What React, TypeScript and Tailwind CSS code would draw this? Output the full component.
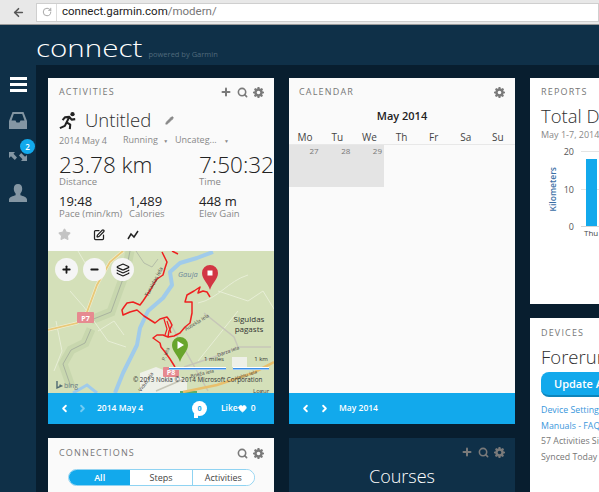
import { ArrowLeft, RotateCw, Plus, Minus, Search, Star, SquarePen, Pencil, ChevronLeft, ChevronRight, Heart, Layers } from "lucide-react";

function Gear({ className }: { className?: string }) {
  return (
    <svg viewBox="0 0 24 24" className={className} fill="currentColor">
      <path fillRule="evenodd" d="M10 0h4l.6 3.200 1.900.8 2.700-1.800 2.800 2.800-1.800 2.700.8 1.900L24 10.200v3.600l-3.200.6-.8 1.900 1.800 2.700-2.800 2.800-2.700-1.800-1.900.8L14 24h-4l-.6-3.200-1.900-.8L4.800 21.800 2 19l1.800-2.700-.8-1.900L0 13.800v-3.600l3.200-.6.8-1.900L2.200 5 5 2.200l2.700 1.800 1.700-.8zM12 8a4 4 0 100 8 4 4 0 000-8z" />
    </svg>
  );
}

function CardTools({ add, search }: { add?: boolean; search?: boolean }) {
  return (
    <div className="flex items-center gap-[5px] text-[#7a7a7a]">
      {add && <Plus className="w-[12px] h-[12px]" strokeWidth={4} />}
      {search && <Search className="w-[11px] h-[11px]" strokeWidth={3.5} />}
      <Gear className="w-[11px] h-[11px]" />
    </div>
  );
}

function CardTitle({ children }: { children: string }) {
  return <div className="text-[9px] leading-[14px] tracking-[0.13em] text-[#777777] uppercase">{children}</div>;
}

function Stat({ value, label, width, big }: { value: string; label: string; width: string; big?: boolean }) {
  return (
    <div className={width + " shrink-0"}>
      <div className={big ? "text-[22.5px] leading-[22px] font-light text-[#222222] whitespace-nowrap" : "text-[13px] leading-[14px] text-[#222222] whitespace-nowrap"}>{value}</div>
      <div className="text-[9.5px] leading-[11px] text-[#888888] whitespace-nowrap">{label}</div>
    </div>
  );
}

function MapView() {
  return (
    <svg viewBox="0 0 226 142" className="absolute inset-0 w-full h-full" fontFamily="Open Sans">
      <rect width="226" height="142" fill="#d4e0b9" />
      {/* forest bands and gray roads */}
      <path d="M43 78L37 92 23 99 15 113 23 136M43 69L63 61 72 36 78 20 82 0" stroke="#c8d7ae" strokeWidth="9" fill="none" />
      <path d="M43 78L37 92 23 99 15 113 23 136M43 69L63 61 72 36 78 20 82 0" stroke="#a9b39f" strokeWidth="1" fill="none" />
      <path d="M8 70L14 100 6 120M22 40L36 56 60 90 78 96M50 80L66 70 76 84M150 110L190 60M170 40L200 50 215 40 226 58M30 0L43 22M150 52C170 48 180 30 200 24" stroke="#e7eed6" strokeWidth="1" fill="none" />
      <path d="M88 0L96 12 104 16 110 8" stroke="#b4bda8" strokeWidth="1" fill="none" />
      {/* water */}
      <path d="M67 142L75 122 89 94 92 77 100 60 115 47 124 34 122 21 132 12 149 7 165 1" stroke="#a0cbea" strokeWidth="4" fill="none" strokeLinejoin="round" />
      <path d="M25 142L39 134 49 142" stroke="#a0cbea" strokeWidth="3" fill="none" />
      {/* town */}
      <path d="M92 122L108 116 128 124 139 130 139 142 92 142z" fill="#eef0e8" />
      <rect x="184" y="106" width="15" height="10" fill="#eef0e8" />
      <rect x="132" y="140" width="17" height="2" fill="#5fae6a" />
      {/* main roads */}
      <path d="M156 62L186 86 190 96M223 96L190 96 166 106 136 116M122 72L132 90 160 140M108 140L136 128" stroke="#c6c6b8" strokeWidth="1.500" fill="none" />
      <path d="M0 79L29 72 39 61 49 34 62 11 75 0" stroke="#f3eed2" strokeWidth="3" fill="none" />
      <path d="M0 79L29 72 39 61 49 34 62 11 75 0" stroke="#e8c978" strokeWidth="1.800" fill="none" />
      <path d="M135 141L169 134 205 122 226 111" stroke="#e8bf6c" strokeWidth="2.500" fill="none" />
      {/* route */}
      <path d="M114 1L119 11 117 17 115 24 109 28 107 31 103 38 99 44 95 50 92 54 85 51 79 52 76 56 74 59 75 64 82 61 89 59 96 65 107 72 112 68 119 66 122 70 124 74 121 80 120 86 115 84 109 84 105 87 112 92 113 96 117 101 122 108 127 116" stroke="#ee2020" strokeWidth="1.500" fill="none" strokeLinejoin="round" />
      <path d="M120 86L126 85 132 82 137 76 142 72 144 62 144 51 137 51 139 44 146 40 152 36 150 42 155 40 159 41 162 46M124 0L130 3" stroke="#ee2020" strokeWidth="1.500" fill="none" strokeLinejoin="round" />
      <path d="M116 68L119 78 117 84M119 70L123 82" stroke="#ee2020" strokeWidth="1.200" fill="none" />
      {/* signs */}
      <rect x="29" y="61" width="17" height="11" rx="1" fill="#e68a90" />
      <rect x="115" y="116" width="16" height="10" rx="1" fill="#e68a90" />
      <text x="37.500" y="69.500" fontSize="7" fontWeight="700" fill="#fff" textAnchor="middle">P7</text>
      <text x="123" y="124" fontSize="7" fontWeight="700" fill="#fff" textAnchor="middle">P8</text>
      {/* labels */}
      <text x="130" y="26" fontSize="7.500" fontStyle="italic" fill="#6f8a9b">Gauja</text>
      <text x="201" y="71" fontSize="8" fill="#333" textAnchor="middle">Siguldas</text>
      <text x="201" y="81" fontSize="8" fill="#333" textAnchor="middle">pagasts</text>
      <text x="0" y="0" fontSize="5.500" fill="#444" transform="translate(100 46) rotate(-62)">Turaidas iela</text>
      <text x="0" y="0" fontSize="5" fill="#444" transform="translate(138 80) rotate(-32)">Ausekļa iela</text>
      <text x="0" y="0" fontSize="5" fill="#444" transform="translate(170 106) rotate(-20)">Dārza iela</text>
      <text x="0" y="0" fontSize="5" fill="#444" transform="translate(143 127) rotate(-14)">Brieža iela</text>
      <text x="0" y="0" fontSize="5" fill="#444" transform="translate(117 110) rotate(-70)">P. iela</text>
      <text x="0" y="0" fontSize="5" fill="#444" transform="translate(93 141) rotate(-55)">Vidus iela</text>
      <text x="0" y="0" fontSize="5" fill="#444" transform="translate(188 129) rotate(-18)">Vaļņu iela</text>
      <text x="205" y="142" fontSize="6" fill="#444">Logur</text>
      {/* pins */}
      <path d="M162 39C160 32 154 28 154 22A8 8 0 0 1 170 22C170 28 164 32 162 39Z" fill="#d23644" />
      <rect x="159.500" y="19.500" width="5" height="5" fill="#ffffff" />
      <path d="M132 111C130 104 124 100 124 94A8 8 0 0 1 140 94C140 100 134 104 132 111Z" fill="#68a52c" />
      <path d="M129.500 90L136 94 129.500 98Z" fill="#ffffff" />
      {/* scale and attribution */}
      <text x="166" y="110" fontSize="6" fill="#333" textAnchor="middle">1 miles</text>
      <text x="213" y="110" fontSize="6" fill="#333" textAnchor="middle">1 km</text>
      <rect x="121" y="116" width="57" height="3" fill="#ffffff" />
      <rect x="185" y="116" width="36" height="3" fill="#ffffff" />
      <rect x="121" y="117" width="57" height="1.500" fill="#3b8fe8" />
      <rect x="185" y="117" width="36" height="1.500" fill="#3b8fe8" />
      <text x="85" y="131" fontSize="6.300" fill="#333">© 2013 Nokia   © 2014 Microsoft Corporation</text>
      <text x="16" y="137" fontSize="7" fill="#6e7f86">bing</text>
      <path d="M9 130v7l4.500-2-2-1" stroke="#4f6a72" strokeWidth="1.400" fill="none" />
    </svg>
  );
}

function BlueBar({ children }: { children: React.ReactNode }) {
  return <div className="h-[31px] shrink-0 flex items-center pl-[11px] bg-[#12a9ec] text-white">{children}</div>;
}

export default function App() {
  return (
    <div className="w-[599px] h-[492px] overflow-hidden flex flex-col bg-[#081e2f] font-['Open_Sans',sans-serif]">
      {/* browser bar */}
      <div className="h-[25px] shrink-0 flex items-center pl-[12px] gap-[11px] bg-[#e8e8e8] border-b border-[#9a9a9a]">
        <ArrowLeft className="w-[13px] h-[13px] text-[#555555]" strokeWidth={3} />
        <div className="flex-1 h-[19px] flex items-center bg-white border border-[#cfcfcf]">
          <div className="w-[20px] h-full flex items-center justify-center border-r border-[#dddddd]">
            <RotateCw className="w-[10px] h-[10px] text-[#999999]" />
          </div>
          <span className="pl-[5px] text-[11.5px] font-['Roboto',sans-serif] text-[#222222]">connect.garmin.com<span className="text-[#777777]">/modern/</span></span>
        </div>
      </div>

      {/* header */}
      <div className="h-[40px] shrink-0 flex items-end pl-[36px] pb-[4px] bg-[#0f3048]">
        <span className="origin-left scale-x-[1.23] text-[24px] leading-[26px] text-white font-light">connect</span>
        <span className="ml-[26px] pb-[1px] text-[7.5px] leading-[12px] text-[#4f6a7c]">powered by Garmin</span>
      </div>

      <div className="flex-1 flex min-h-0">
        {/* left rail */}
        <div className="w-[36px] shrink-0 flex flex-col items-center pt-[12px] bg-[#0f3048] text-[#8496a3]">
          <div className="w-[17px] flex flex-col gap-[3px]">
            <div className="h-[3px] bg-white" />
            <div className="h-[3px] bg-white" />
            <div className="h-[3px] bg-white" />
          </div>
          <svg viewBox="0 0 18 17" className="mt-[20px] w-[18px] h-[17px]" fill="currentColor">
            <path fillRule="evenodd" d="M3.500 0h11L18 9v8H0V9zM4.800 2L2.500 8.500H6.500L7.500 10.500h3L11.500 8.500H15.500L13.200 2z" />
          </svg>
          <div className="relative mt-[23px] w-[18px] h-[9px]">
            <svg viewBox="0 0 18 9" className="w-full h-full" fill="currentColor">
              <path d="M0 0h6L4.500 1.800 8 5.500 5.800 8 2 4.200 0 6zM18 9h-6l1.500-1.800L10 3.500 12.200 1 16 4.800 18 3z" />
            </svg>
            <span className="absolute -top-[13px] -right-[8px] w-[15px] h-[15px] rounded-full bg-[#12a9ec] text-white text-[8px] leading-[15px] text-center font-semibold">2</span>
          </div>
          <svg viewBox="0 0 18 18" className="mt-[23px] w-[18px] h-[18px]" fill="currentColor">
            <path d="M9 0c2.800 0 4.200 2 4.200 4.700 0 2-.8 3.600-1.800 4.800v1.700c2.500.9 6.600 1.900 6.600 4.300V18H0v-2.500c0-2.400 4.100-3.400 6.600-4.300V9.500C5.600 8.300 4.800 6.700 4.800 4.700 4.800 2 6.200 0 9 0z" />
          </svg>
        </div>

        <div className="flex-1 pl-[12px] pt-[13px] flex gap-[15px] min-w-0">
          {/* column 1 */}
          <div className="w-[226px] shrink-0 flex flex-col gap-[14px]">
            <div className="h-[346px] shrink-0 flex flex-col bg-[#fafafa]">
              <div className="flex-1 pl-[11px] pr-[10px] pt-[7px] overflow-hidden">
                <div className="flex items-center justify-between">
                  <CardTitle>Activities</CardTitle>
                  <CardTools add search />
                </div>
                <div className="mt-[9px] h-[24px] flex items-center">
                  <svg viewBox="0 0 20 20" className="w-[18px] h-[19px] text-[#222222]" fill="none" stroke="currentColor" strokeWidth="2.300" strokeLinejoin="round">
                    <circle cx="15" cy="3" r="2.400" fill="currentColor" stroke="none" />
                    <path d="M4 9.500L6.500 6.500 11.500 6 14 9 18 8.500M11.500 6L8.500 12 12.500 14.500 12 19.500M8.500 12L6.500 16 1 18.500" />
                  </svg>
                  <span className="ml-[8px] text-[18.5px] leading-[24px] font-light text-[#2f2f2f]">Untitled</span>
                  <Pencil className="ml-[14px] w-[9px] h-[9px] text-[#888888]" fill="currentColor" />
                </div>
                <div className="mt-[1px] flex items-center text-[9px] leading-[13px] text-[#888888]">
                  <span className="w-[64px]">2014 May 4</span>
                  <span className="w-[52px] whitespace-nowrap">Running <span className="text-[5px] pl-[3px]">▼</span></span>
                  <span className="whitespace-nowrap">Uncateg... <span className="text-[5px] pl-[5px]">▼</span></span>
                </div>
                <div className="mt-[6px] flex">
                  <Stat big width="w-[140px]" value="23.78 km" label="Distance" />
                  <Stat big width="w-[70px]" value="7:50:32" label="Time" />
                </div>
                <div className="mt-[7px] flex">
                  <Stat width="w-[70px]" value="19:48" label="Pace (min/km)" />
                  <Stat width="w-[70px]" value="1,489" label="Calories" />
                  <Stat width="w-[70px]" value="448 m" label="Elev Gain" />
                </div>
                <div className="mt-[9px] flex items-center">
                  <Star className="-ml-[1px] w-[13px] h-[13px] text-[#c4c4c4]" fill="currentColor" />
                  <SquarePen className="ml-[22px] w-[12px] h-[12px] text-[#222222]" strokeWidth={2.500} />
                  <svg viewBox="0 0 12 12" className="ml-[22px] w-[12px] h-[12px] text-[#222222]" fill="none" stroke="currentColor" strokeWidth="1.500">
                    <path d="M1 10L4 5 7 8 11 2" />
                  </svg>
                </div>
              </div>
              <div className="relative h-[142px] shrink-0 overflow-hidden">
                <MapView />
                <div className="absolute left-[7px] top-[7px] flex gap-[5px] text-[#1a1a1a]">
                  <div className="w-[23px] h-[23px] rounded-full bg-[#f5f5f5] flex items-center justify-center"><Plus className="w-[11px] h-[11px]" strokeWidth={4} /></div>
                  <div className="w-[23px] h-[23px] rounded-full bg-[#f5f5f5] flex items-center justify-center"><Minus className="w-[11px] h-[11px]" strokeWidth={4} /></div>
                  <div className="w-[23px] h-[23px] rounded-full bg-[#f5f5f5] flex items-center justify-center"><Layers className="w-[14px] h-[14px]" strokeWidth={2} /></div>
                </div>
              </div>
              <BlueBar>
                <ChevronLeft className="w-[11px] h-[11px]" strokeWidth={4} />
                <ChevronRight className="ml-[7px] w-[11px] h-[11px] opacity-40" strokeWidth={4} />
                <span className="ml-[9px] w-[95px] text-[8.5px] font-semibold">2014 May 4</span>
                <div className="relative w-[15px] h-[15px] rounded-full bg-white text-[#12a9ec] text-[7px] leading-[15px] text-center font-bold">
                  0
                  <span className="absolute left-[2px] -bottom-[2px] w-[4px] h-[4px] bg-white" />
                </div>
                <span className="ml-[14px] text-[8.5px] font-semibold">Like</span>
                <Heart className="w-[9px] h-[9px]" fill="currentColor" />
                <span className="ml-[4px] text-[8.5px] font-semibold">0</span>
              </BlueBar>
            </div>
            <div className="flex-1 pl-[11px] pr-[10px] pt-[8px] bg-[#fafafa]">
              <div className="flex items-center justify-between">
                <CardTitle>Connections</CardTitle>
                <CardTools search />
              </div>
              <div className="mt-[9px] ml-[9px] mr-[9px] h-[17px] flex rounded-full border border-[#8fd3f2] overflow-hidden text-[9px] text-[#444444]">
                <div className="flex-1 flex items-center justify-center bg-[#12a9ec] text-white font-semibold">All</div>
                <div className="flex-1 flex items-center justify-center bg-white border-r border-[#8fd3f2]">Steps</div>
                <div className="flex-1 flex items-center justify-center bg-white">Activities</div>
              </div>
            </div>
          </div>

          {/* column 2 */}
          <div className="w-[226px] shrink-0 flex flex-col gap-[14px]">
            <div className="h-[346px] shrink-0 flex flex-col bg-[#fafafa]">
              <div className="flex-1 pt-[7px]">
                <div className="flex items-center justify-between pl-[10px] pr-[10px]">
                  <CardTitle>Calendar</CardTitle>
                  <CardTools />
                </div>
                <div className="mt-[10px] text-center text-[11px] leading-[14px] font-semibold text-[#222222]">May 2014</div>
                <div className="mt-[7px] w-[225px] grid grid-cols-7 text-[10px] leading-[14px] text-[#444444] text-center">
                  {["Mo", "Tu", "We", "Th", "Fr", "Sa", "Su"].map((d) => <span key={d}>{d}</span>)}
                </div>
                <div className="border-t border-[#e8e8e8]">
                  <div className="grid grid-cols-3 w-[95px] h-[42px] bg-[#e4e4e4]">
                    {["27", "28", "29"].map((d) => (
                      <div key={d} className="pr-[2px] text-right text-[8px] leading-[11px] text-[#777777]">{d}</div>
                    ))}
                  </div>
                </div>
              </div>
              <BlueBar>
                <ChevronLeft className="w-[11px] h-[11px]" strokeWidth={4} />
                <ChevronRight className="ml-[8px] w-[11px] h-[11px]" strokeWidth={4} />
                <span className="ml-[9px] text-[8.5px] font-semibold">May 2014</span>
              </BlueBar>
            </div>
            <div className="flex-1 pt-[8px] pr-[10px] bg-[#0f3048] text-center">
              <div className="flex justify-end"><CardTools add search /></div>
              <div className="mt-[6px] pl-[10px] text-[18px] leading-[24px] font-light text-white">Courses</div>
            </div>
          </div>

          {/* column 3 */}
          <div className="flex-1 flex flex-col gap-[14px] min-w-0">
            <div className="h-[226px] shrink-0 pl-[11px] pt-[7px] bg-white overflow-hidden">
              <CardTitle>Reports</CardTitle>
              <div className="mt-[5px] text-[18.5px] leading-[24px] font-light text-[#2f2f2f] whitespace-nowrap">Total Distance</div>
              <div className="text-[9px] leading-[13px] text-[#888888] whitespace-nowrap">May 1-7, 2014</div>
              <div className="mt-[5px] flex h-[86px]">
                <div className="ml-[3px] w-[19px] flex items-center justify-center">
                  <span className="[writing-mode:vertical-rl] rotate-180 text-[8.5px] font-semibold text-[#3b6ea5]">Kilometers</span>
                </div>
                <div className="w-[11px] flex flex-col justify-between items-end text-[9px] leading-[11px] text-[#555555]">
                  <span>20</span><span>10</span><span>0</span>
                </div>
                <div className="relative ml-[7px] flex-1">
                  <div className="absolute left-0 right-0 top-[5px] h-px bg-[#e4e4e4]" />
                  <div className="absolute left-0 right-0 top-[43px] h-px bg-[#e4e4e4]" />
                  <div className="absolute left-0 right-0 top-[80px] h-px bg-[#d4d4d4]" />
                  <div className="absolute left-[5px] top-[13px] w-[11px] h-[67px] bg-[#12a9ec]" />
                  <div className="absolute left-[3px] top-[81px] text-[8px] leading-[12px] text-[#444444]">Thu</div>
                </div>
              </div>
            </div>
            <div className="flex-1 pl-[11px] pt-[8px] bg-white overflow-hidden whitespace-nowrap">
              <CardTitle>Devices</CardTitle>
              <div className="mt-[5px] text-[18.5px] leading-[24px] font-light text-[#2f2f2f]">Forerunner</div>
              <div className="mt-[3px] w-[100px] h-[25px] pl-[13px] rounded-l-[8px] bg-[#12a9ec] border-b-2 border-[#0d85bb] text-[11px] leading-[23px] font-semibold text-white">Update All</div>
              <div className="mt-[6px] text-[8.8px] leading-[15.500px] text-[#3a97dc]">Device Settings</div>
              <div className="text-[8.8px] leading-[15.500px] text-[#3a97dc]">Manuals - FAQs</div>
              <div className="text-[8.8px] leading-[15.500px] text-[#777777]">57 Activities Since</div>
              <div className="text-[8.8px] leading-[15.500px] text-[#777777]">Synced Today @</div>
            </div>
          </div>
        </div>
      </div>
    </div>
  );
}
